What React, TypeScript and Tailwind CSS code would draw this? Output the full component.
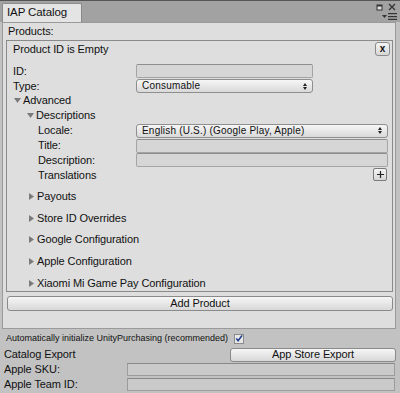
import React from "react";

const Tri = ({ open }: { open?: boolean }) =>
  open ? (
    <svg width="7" height="7" viewBox="0 0 7 7" className="shrink-0">
      <path d="M0 1 L7 1 L3.5 6 Z" fill="#7a7a7a" />
    </svg>
  ) : (
    <svg width="7" height="7" viewBox="0 0 7 7" className="shrink-0">
      <path d="M1 0 L6 3.5 L1 7 Z" fill="#7a7a7a" />
    </svg>
  );

const Field = ({ w }: { w: string }) => (
  <div className={`h-[14px] ${w} bg-[#d6d6d6] border border-[#a4a4a4] border-t-[#8e8e8e] rounded-[2px]`} />
);

const Drop = ({ w, text }: { w: string; text: string }) => (
  <div
    className={`h-[14px] ${w} rounded-[3px] border border-[#8f8f8f] bg-gradient-to-b from-[#f6f6f6] to-[#d9d9d9] flex items-center pl-[5px] pr-[5px] text-[10px] leading-none`}
  >
    <span className="flex-1 tracking-[0.2px]">{text}</span>
    <svg width="4" height="7" viewBox="0 0 4 7">
      <path d="M0 3 L2 0 L4 3 Z M0 4 L2 7 L4 4 Z" fill="#222" />
    </svg>
  </div>
);

const Foldout = ({ text, first }: { text: string; first?: boolean }) => (
  <div className={`h-[15px] flex items-center pl-[21px] gap-[2px] ${first ? "mt-[6px]" : "mt-[7px]"}`}>
    <Tri />
    <span>{text}</span>
  </div>
);

export default function App() {
  return (
    <div
      className="w-[400px] h-[393px] overflow-hidden bg-[#c2c2c2] text-[#111] text-[11px] tracking-[-0.1px] leading-none relative"
      style={{ fontFamily: '"Liberation Sans", Arial, sans-serif' }}
    >
      {/* Tab strip */}
      <div className="h-[22px] bg-[#a2a2a2] border-t border-[#555] flex items-end relative">
        <div className="ml-[2px] w-[80px] h-[19px] bg-[#e4e4e4] border border-b-0 border-[#8a8a8a] rounded-t-[2px] flex items-center pl-[4px] text-[11.5px]">
          IAP Catalog
        </div>
        <div className="absolute right-[4px] top-[2px] flex items-center gap-[5px]">
          <svg width="7" height="7" viewBox="0 0 7 7">
            <rect x="0.5" y="0.5" width="6" height="6" fill="#333" />
            <rect x="1.5" y="2.5" width="4" height="3" fill="#ddd" />
          </svg>
          <svg width="8" height="8" viewBox="0 0 8 8">
            <path d="M1 1 L7 7 M7 1 L1 7" stroke="#333" strokeWidth="1.3" />
          </svg>
        </div>
        <div className="absolute right-[3px] top-[12px] flex items-center gap-[1px]">
          <svg width="5" height="3" viewBox="0 0 5 3">
            <path d="M0 0 L5 0 L2.5 3 Z" fill="#333" />
          </svg>
          <svg width="9" height="7" viewBox="0 0 9 7">
            <rect x="0" y="0" width="9" height="1.2" fill="#333" />
            <rect x="0" y="3" width="9" height="1.2" fill="#333" />
            <rect x="0" y="5.8" width="9" height="1.2" fill="#333" />
          </svg>
        </div>
      </div>

      {/* Products panel */}
      <div className="ml-[2px] w-[394px] h-[307px] bg-[#dedede] border border-[#9a9a9a] flex flex-col">
        <div className="h-[16px] flex items-center pl-[5px]">Products:</div>
        <div className="ml-[3px] mt-[1px] w-[387px] h-[252px] border border-[#8a8a8a] flex flex-col relative">
          <div className="h-[16px] flex items-center pl-[6px] mt-[1px]">Product ID is Empty</div>
          <div className="absolute right-[2px] top-[1px] w-[15px] h-[14px] rounded-[3px] border border-[#8a8a8a] bg-gradient-to-b from-[#f4f4f4] to-[#d6d6d6] flex items-center justify-center text-[10px] font-bold">
            x
          </div>

          <div className="h-[15px] mt-[6px] flex items-center">
            <span className="w-[129px] pl-[6px]">ID:</span>
            <Field w="w-[177px]" />
          </div>
          <div className="h-[15px] flex items-center">
            <span className="w-[129px] pl-[6px]">Type:</span>
            <Drop w="w-[177px]" text="Consumable" />
          </div>
          <div className="h-[15px] flex items-center pl-[7px] gap-[2px]">
            <Tri open />
            <span>Advanced</span>
          </div>
          <div className="h-[15px] flex items-center pl-[20px] gap-[2px]">
            <Tri open />
            <span>Descriptions</span>
          </div>
          <div className="h-[15px] flex items-center">
            <span className="w-[129px] pl-[31px]">Locale:</span>
            <Drop w="w-[252px]" text="English (U.S.) (Google Play, Apple)" />
          </div>
          <div className="h-[15px] flex items-center">
            <span className="w-[129px] pl-[31px]">Title:</span>
            <Field w="w-[252px]" />
          </div>
          <div className="h-[15px] flex items-center">
            <span className="w-[129px] pl-[31px]">Description:</span>
            <Field w="w-[252px]" />
          </div>
          <div className="h-[15px] flex items-center relative">
            <span className="w-[129px] pl-[31px]">Translations</span>
            <div className="absolute left-[366px] top-[0px] w-[14px] h-[13px] rounded-[2px] border border-[#7a7a7a] bg-gradient-to-b from-[#f4f4f4] to-[#d6d6d6] flex items-center justify-center">
              <svg width="7" height="7" viewBox="0 0 7 7">
                <path d="M3.5 0 V7 M0 3.5 H7" stroke="#222" strokeWidth="1.2" />
              </svg>
            </div>
          </div>

          <Foldout text="Payouts" first />
          <Foldout text="Store ID Overrides" />
          <Foldout text="Google Configuration" />
          <Foldout text="Apple Configuration" />
          <Foldout text="Xiaomi Mi Game Pay Configuration" />
        </div>
        <div className="ml-[4px] mt-[4px] w-[386px] h-[15px] rounded-[3px] border border-[#8a8a8a] bg-gradient-to-b from-[#f6f6f6] to-[#d8d8d8] flex items-center justify-center">
          Add Product
        </div>
      </div>

      {/* Bottom settings */}
      <div className="h-[15px] mt-[2px] flex items-center pl-[6px] text-[9px] tracking-normal">
        <span>Automatically initialize UnityPurchasing (recommended)</span>
        <div className="ml-[6px] w-[10px] h-[10px] border border-[#8a8a8a] bg-[#e8e8e8] flex items-center justify-center">
          <svg width="9" height="9" viewBox="0 0 9 9">
            <path d="M1.5 4.5 L3.5 7 L8 1" stroke="#1e3a8a" strokeWidth="1.8" fill="none" />
          </svg>
        </div>
      </div>
      <div className="h-[15px] mt-[1px] flex items-center">
        <span className="w-[230px] pl-[4px]">Catalog Export</span>
        <div className="w-[166px] h-[14px] rounded-[3px] border border-[#8a8a8a] bg-gradient-to-b from-[#f6f6f6] to-[#d8d8d8] flex items-center justify-center">
          App Store Export
        </div>
      </div>
      <div className="h-[15px] flex items-center">
        <span className="w-[127px] pl-[4px]">Apple SKU:</span>
        <div className="h-[13px] w-[268px] bg-[#cacaca] border border-[#9c9c9c] border-t-[#888]" />
      </div>
      <div className="h-[15px] flex items-center">
        <span className="w-[127px] pl-[4px]">Apple Team ID:</span>
        <div className="h-[13px] w-[268px] bg-[#cacaca] border border-[#9c9c9c] border-t-[#888]" />
      </div>
    </div>
  );
}
